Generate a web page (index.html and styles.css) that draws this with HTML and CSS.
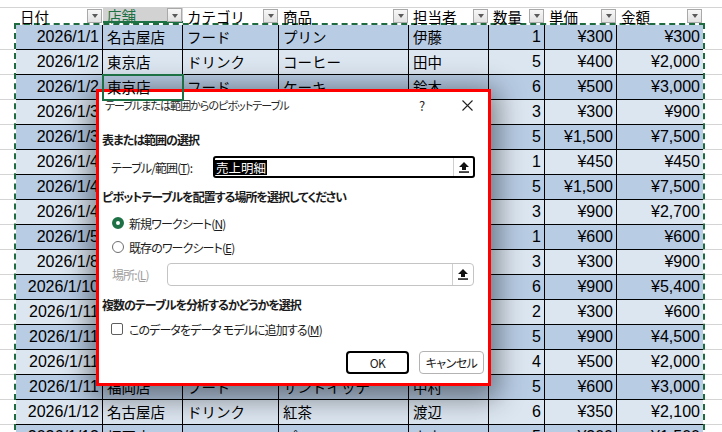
FILE: index.html
```html
<!DOCTYPE html>
<html lang="ja">
<head>
    <meta charset="UTF-8">
    <title>売上明細</title>
    <link rel="stylesheet" href="styles.css">
</head>
<body>
    <div class="sheet">
        <div class="gut"></div>
        <div class="main">
            <div class="head">
                <div class="hc c1"><span>日付</span><i class="dd"></i></div>
                <div class="hc c2 sel"><span>店舗</span><i class="dd"></i></div>
                <div class="hc c3"><span>カテゴリ</span><i class="dd"></i></div>
                <div class="hc c4"><span>商品</span><i class="dd"></i></div>
                <div class="hc c5"><span>担当者</span><i class="dd"></i></div>
                <div class="hc c6"><span>数量</span><i class="dd"></i></div>
                <div class="hc c7"><span>単価</span><i class="dd"></i></div>
                <div class="hc c8"><span>金額</span><i class="dd"></i></div>
            </div>
            <!-- cells fully under the dialog are left empty -->
            <div class="data">
                <div class="row"><div class="c1 num">2026/1/1</div><div class="c2">名古屋店</div><div class="c3">フード</div><div class="c4">プリン</div><div class="c5">伊藤</div><div class="c6 num">1</div><div class="c7 num">¥300</div><div class="c8 num">¥300</div></div>
                <div class="row"><div class="c1 num">2026/1/2</div><div class="c2">東京店</div><div class="c3">ドリンク</div><div class="c4">コーヒー</div><div class="c5">田中</div><div class="c6 num">5</div><div class="c7 num">¥400</div><div class="c8 num">¥2,000</div></div>
                <div class="row"><div class="c1 num">2026/1/2</div><div class="c2 active">東京店</div><div class="c3">フード</div><div class="c4">ケーキ</div><div class="c5">鈴木</div><div class="c6 num">6</div><div class="c7 num">¥500</div><div class="c8 num">¥3,000</div></div>
                <div class="row"><div class="c1 num">2026/1/3</div><div class="c2"></div><div class="c3"></div><div class="c4"></div><div class="c5"></div><div class="c6 num">3</div><div class="c7 num">¥300</div><div class="c8 num">¥900</div></div>
                <div class="row"><div class="c1 num">2026/1/3</div><div class="c2"></div><div class="c3"></div><div class="c4"></div><div class="c5"></div><div class="c6 num">5</div><div class="c7 num">¥1,500</div><div class="c8 num">¥7,500</div></div>
                <div class="row"><div class="c1 num">2026/1/4</div><div class="c2"></div><div class="c3"></div><div class="c4"></div><div class="c5"></div><div class="c6 num">1</div><div class="c7 num">¥450</div><div class="c8 num">¥450</div></div>
                <div class="row"><div class="c1 num">2026/1/4</div><div class="c2"></div><div class="c3"></div><div class="c4"></div><div class="c5"></div><div class="c6 num">5</div><div class="c7 num">¥1,500</div><div class="c8 num">¥7,500</div></div>
                <div class="row"><div class="c1 num">2026/1/4</div><div class="c2"></div><div class="c3"></div><div class="c4"></div><div class="c5"></div><div class="c6 num">3</div><div class="c7 num">¥900</div><div class="c8 num">¥2,700</div></div>
                <div class="row"><div class="c1 num">2026/1/5</div><div class="c2"></div><div class="c3"></div><div class="c4"></div><div class="c5"></div><div class="c6 num">1</div><div class="c7 num">¥600</div><div class="c8 num">¥600</div></div>
                <div class="row"><div class="c1 num">2026/1/8</div><div class="c2"></div><div class="c3"></div><div class="c4"></div><div class="c5"></div><div class="c6 num">3</div><div class="c7 num">¥300</div><div class="c8 num">¥900</div></div>
                <div class="row"><div class="c1 num">2026/1/10</div><div class="c2"></div><div class="c3"></div><div class="c4"></div><div class="c5"></div><div class="c6 num">6</div><div class="c7 num">¥900</div><div class="c8 num">¥5,400</div></div>
                <div class="row"><div class="c1 num">2026/1/11</div><div class="c2"></div><div class="c3"></div><div class="c4"></div><div class="c5"></div><div class="c6 num">2</div><div class="c7 num">¥300</div><div class="c8 num">¥600</div></div>
                <div class="row"><div class="c1 num">2026/1/11</div><div class="c2"></div><div class="c3"></div><div class="c4"></div><div class="c5"></div><div class="c6 num">5</div><div class="c7 num">¥900</div><div class="c8 num">¥4,500</div></div>
                <div class="row"><div class="c1 num">2026/1/11</div><div class="c2"></div><div class="c3"></div><div class="c4"></div><div class="c5"></div><div class="c6 num">4</div><div class="c7 num">¥500</div><div class="c8 num">¥2,000</div></div>
                <div class="row"><div class="c1 num">2026/1/11</div><div class="c2">福岡店</div><div class="c3">フード</div><div class="c4">サンドイッチ</div><div class="c5">中村</div><div class="c6 num">5</div><div class="c7 num">¥600</div><div class="c8 num">¥3,000</div></div>
                <div class="row"><div class="c1 num">2026/1/12</div><div class="c2">名古屋店</div><div class="c3">ドリンク</div><div class="c4">紅茶</div><div class="c5">渡辺</div><div class="c6 num">6</div><div class="c7 num">¥350</div><div class="c8 num">¥2,100</div></div>
                <div class="row"><div class="c1 num">2026/1/13</div><div class="c2">福岡店</div><div class="c3">フード</div><div class="c4">プリン</div><div class="c5">山本</div><div class="c6 num">5</div><div class="c7 num">¥300</div><div class="c8 num">¥1,500</div></div>
            </div>
        </div>
        <div class="gut"></div>
    </div>

    <div class="dlg">
        <div class="dlg-title">
            <span>テーブルまたは範囲からのピボットテーブル</span>
            <span class="tbtn help">?</span>
            <span class="tbtn close">
                <svg width="11" height="11" viewBox="0 0 11 11"><path d="M0.5 0.5L10.5 10.5M10.5 0.5L0.5 10.5" stroke="#222" stroke-width="1.1" fill="none"/></svg>
            </span>
        </div>

        <div class="sec">表または範囲の選択</div>
        <div class="line range">
            <label class="lbl">テーブル/範囲(<u>T</u>):</label>
            <div class="field">
                <div class="val"><span class="hl">売上明細</span></div>
                <div class="pick">
                    <svg width="10" height="11" viewBox="0 0 10 11"><path d="M5 0L10 5H7V8H3V5H0Z" fill="#111"/><rect x="0" y="9.3" width="10" height="1.5" fill="#111"/></svg>
                </div>
            </div>
        </div>

        <div class="sec">ピボットテーブルを配置する場所を選択してください</div>
        <div class="line opt first"><i class="radio on"></i>新規ワークシート(<u>N</u>)</div>
        <div class="line opt"><i class="radio"></i>既存のワークシート(<u>E</u>)</div>
        <div class="line loc">
            <label class="lbl off">場所:(<u>L</u>)</label>
            <div class="field dis">
                <div class="val"></div>
                <div class="pick">
                    <svg width="10" height="11" viewBox="0 0 10 11"><path d="M5 0L10 5H7V8H3V5H0Z" fill="#111"/><rect x="0" y="9.3" width="10" height="1.5" fill="#111"/></svg>
                </div>
            </div>
        </div>

        <div class="sec">複数のテーブルを分析するかどうかを選択</div>
        <div class="line chk"><i class="box"></i>このデータをデータ モデルに追加する(<u>M</u>)</div>

        <div class="btns">
            <button class="btn ok">OK</button>
            <button class="btn">キャンセル</button>
        </div>
    </div>
</body>
</html>
```

FILE: styles.css
```css
body { margin: 0; width: 722px; height: 432px; overflow: hidden; background: #fff; position: relative; }

/* sheet */
.sheet { display: flex; height: 432px; padding-top: 8px; box-sizing: border-box; overflow: hidden;
    background:
        linear-gradient(#d4d4d4, #d4d4d4) 0 7px / 100% 1px no-repeat,
        repeating-linear-gradient(to bottom, transparent 0 24px, #d4d4d4 24px 25px) 0 25px / 100% 420px no-repeat,
        #fff; }
.gut { width: 14px; flex: none; }
.gut:last-child { flex: 1; }
.main { width: 691px; flex: none; }

.head { display: flex; height: 15px; padding: 0 2px; background: #fff; font-family: "Noto Sans CJK JP", sans-serif; font-size: 14.5px; color: #000; }
.hc { display: flex; align-items: center; justify-content: space-between; padding-left: 4px; box-sizing: border-box; line-height: 15px; white-space: nowrap; }
.hc span { margin-top: 1px; }
.hc.sel { background: #d2d2d2; color: #1e7145; box-shadow: inset 0 -2px 0 #1e7145; margin-top: -1px; height: 16px; }
.dd { width: 15px; height: 14px; margin-right: 1px; box-sizing: border-box; border: 1px solid #a9a9a9; background: linear-gradient(#f7f7f7, #e2e2e2); display: flex; align-items: center; justify-content: center; flex: none; }
.dd::after { content: ""; border-left: 3.5px solid transparent; border-right: 3.5px solid transparent; border-top: 4px solid #5a5a5a; margin-top: 1px; }

.data { border: 2px dashed #1e6b40; border-bottom: none; background: #fff; }
.row { display: flex; height: 25px; background: #b8cce4; }
.row:nth-child(even) { background: #dce6f1; }
.row > div { height: 25px; box-sizing: border-box; border-right: 1px solid #000; border-bottom: 1px solid #000; padding: 0 4px; line-height: 24px; white-space: nowrap; overflow: hidden;
    font-family: "Noto Sans CJK JP", sans-serif; font-size: 14.5px; color: #000; }
.row > .num { font-family: "Liberation Sans", sans-serif; font-size: 16px; text-align: right; padding-right: 3px; }
.row > .c8 { border-right: none; }
.row > .active { outline: 2px solid #1e7145; outline-offset: -1px; position: relative; z-index: 1; }

.c1 { width: 87px; }
.c2 { width: 80px; }
.c3 { width: 96px; }
.c4 { width: 130px; }
.c5 { width: 80px; }
.c6 { width: 56px; }
.c7 { width: 72px; }
.c8 { width: 86px; }

/* dialog */
.dlg { position: absolute; left: 96px; top: 89px; width: 395px; height: 297px; box-sizing: border-box; border: 3px solid #ff0000; background: #fff;
    box-shadow: 0 6px 26px 6px rgba(0, 0, 0, 0.45);
    font-family: "Noto Sans CJK JP", sans-serif; font-feature-settings: "palt"; font-size: 12px; letter-spacing: -0.9px; color: #1b1b1b; }
.dlg-title { height: 26px; display: flex; align-items: center; padding-left: 6px; font-size: 11px; letter-spacing: -0.95px; color: #262626; }
.tbtn { width: 28px; height: 26px; display: flex; align-items: center; justify-content: center; letter-spacing: 0; }
.help { margin-left: auto; font-size: 13px; }
.close { margin-left: 17px; margin-right: 7px; }

.sec { font-weight: 700; height: 18px; line-height: 18px; padding-left: 3px; margin-top: 10px; letter-spacing: -1px; }
.sec + .line { margin-top: 7px; }
.line { display: flex; align-items: center; padding-left: 12px; }
.range { height: 22px; }
.sec:nth-of-type(2) { margin-top: 13px; }
.sec:nth-of-type(3) { margin-top: 12px; }
.lbl { width: 102px; flex: none; }
.lbl.off { width: 56px; color: #9d9d9d; padding-left: 1px; box-sizing: border-box; }

.field { width: 262px; height: 22px; box-sizing: border-box; border: 2px solid #000; border-radius: 3px; display: flex; }
.field.dis { width: 307px; height: 23px; border: 1px solid #c4c4c4; border-radius: 4px; }
.val { flex: 1; display: flex; align-items: center; }
.hl { background: #000; color: #fff; font-size: 12.5px; line-height: 15px; padding: 0 1px; font-feature-settings: normal; letter-spacing: 0; }
.pick { width: 19px; border-left: 1px solid #cfcfcf; display: flex; align-items: center; justify-content: center; }
.dis .pick { width: 20px; }

.opt { height: 18px; padding-left: 13px; }
.sec + .opt.first { margin-top: 8px; }
.opt + .opt { margin-top: 6px; }
.radio { width: 12px; height: 12px; box-sizing: border-box; border: 1px solid #6e6e6e; border-radius: 50%; margin-right: 5px; background: #fff; }
.radio.on { border: 4px solid #1e7145; }
.loc { height: 23px; margin-top: 7px; }
.chk { height: 18px; }
.sec + .chk { margin-top: 6px; }
.box { width: 12px; height: 12px; box-sizing: border-box; border: 1px solid #5e5e5e; border-radius: 2px; margin-right: 6px; }

.btns { display: flex; justify-content: flex-end; gap: 10px; margin-top: 13px; padding-right: 4px; }
.btn { height: 23px; box-sizing: border-box; background: #fff; border: 1px solid #b3b3b3; border-radius: 4px; font-family: "Noto Sans CJK JP", sans-serif; font-feature-settings: "palt"; font-size: 12px; letter-spacing: -0.5px; color: #1b1b1b; padding: 0; width: 65px; }
.btn.ok { width: 63px; border: 2px solid #000; }
```
